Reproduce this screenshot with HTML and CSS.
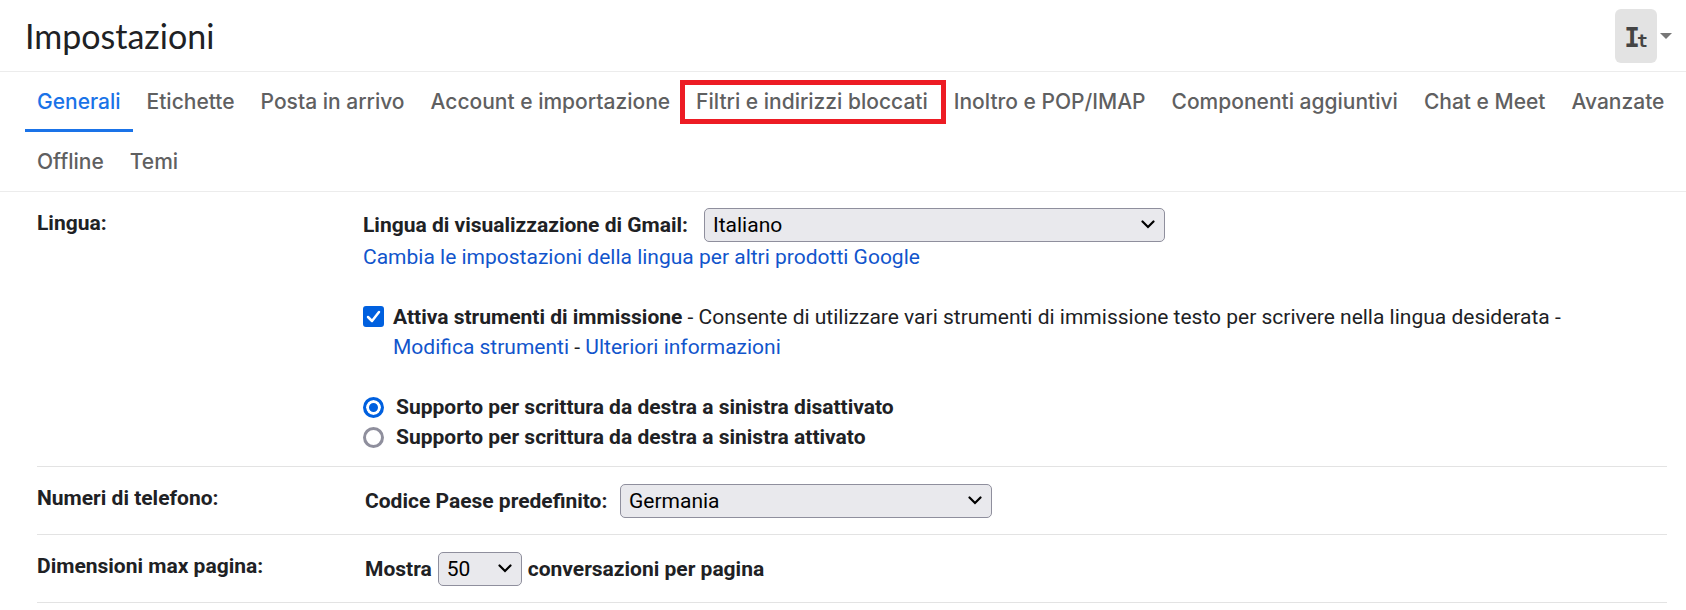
FILE: index.html
```html
<!DOCTYPE html>
<html lang="it">

<head>
    <meta charset="UTF-8">
    <meta name="viewport" content="width=device-width, initial-scale=1.0">
    <title>Impostazioni</title>
    <link rel="stylesheet" href="styles.css">
</head>

<body>
    <header class="header">
        <h1 class="title">Impostazioni</h1>
        <div class="input-tools">
            <button class="tool-button" type="button"><span class="big">I</span><span class="small">t</span></button>
            <button class="tool-menu" type="button" aria-label="Seleziona strumento">
                <svg width="12" height="6" viewBox="0 0 12 6"><path d="M0 0h12L6 6z" fill="#777"/></svg>
            </button>
        </div>
    </header>

    <nav class="tabs">
        <a class="tab active" href="#">Generali</a>
        <a class="tab" href="#">Etichette</a>
        <a class="tab" href="#">Posta in arrivo</a>
        <a class="tab" href="#">Account e importazione</a>
        <a class="tab marked" href="#">Filtri e indirizzi bloccati</a>
        <a class="tab" href="#">Inoltro e POP/IMAP</a>
        <a class="tab" href="#">Componenti aggiuntivi</a>
        <a class="tab" href="#">Chat e Meet</a>
        <a class="tab" href="#">Avanzate</a>
        <a class="tab" href="#">Offline</a>
        <a class="tab" href="#">Temi</a>
    </nav>

    <form class="settings">
        <table class="settings-table">
            <tr>
                <th scope="row">Lingua:</th>
                <td>
                    <div class="field">
                        <label class="language-label" for="language">Lingua di visualizzazione di Gmail:</label>
                        <select id="language" class="select language">
                            <option>Italiano</option>
                            <option>English</option>
                        </select>
                    </div>
                    <div><a href="#">Cambia le impostazioni della lingua per altri prodotti Google</a></div>

                    <div class="option group">
                        <input type="checkbox" id="tools" class="check" checked>
                        <div>
                            <label for="tools">Attiva strumenti di immissione</label> - Consente di utilizzare vari strumenti di immissione testo per scrivere nella lingua desiderata -
                            <br>
                            <a href="#">Modifica strumenti</a> - <a href="#">Ulteriori informazioni</a>
                        </div>
                    </div>

                    <div class="option radio-option group">
                        <input type="radio" id="rtl-off" name="rtl" class="radio" checked>
                        <label for="rtl-off">Supporto per scrittura da destra a sinistra disattivato</label>
                    </div>
                    <div class="option radio-option">
                        <input type="radio" id="rtl-on" name="rtl" class="radio">
                        <label for="rtl-on">Supporto per scrittura da destra a sinistra attivato</label>
                    </div>
                </td>
            </tr>
            <tr class="single">
                <th scope="row">Numeri di telefono:</th>
                <td>
                    <div class="field">
                        <label class="country-label" for="country">Codice Paese predefinito:</label>
                        <select id="country" class="select country">
                            <option>Germania</option>
                            <option>Italia</option>
                        </select>
                    </div>
                </td>
            </tr>
            <tr class="single">
                <th scope="row">Dimensioni max pagina:</th>
                <td>
                    <div class="field">
                        <label for="page-size">Mostra</label>
                        <select id="page-size" class="select page-size">
                            <option>50</option>
                            <option>100</option>
                        </select>
                        <label for="page-size">conversazioni per pagina</label>
                    </div>
                </td>
            </tr>
        </table>
    </form>
</body>

</html>
```

FILE: styles.css
```css
*,
*::after {
    box-sizing: border-box;
}

body {
    margin: 0;
    background-color: #fff;
    color: #202124;
    font-family: Roboto, sans-serif;
    font-size: 21px;
    line-height: 30px;
}

a {
    color: #1155cc;
    text-decoration: none;
}

/* header */
.header {
    display: flex;
    justify-content: space-between;
    align-items: center;
    height: 72px;
    padding: 0 14px 0 25px;
    border-bottom: 1px solid #ececec;
}

.title {
    margin: 0;
    font-family: Lato, sans-serif;
    font-size: 34px;
    font-weight: 400;
}

.input-tools {
    display: flex;
    align-items: center;
    gap: 3px;
}

.tool-button {
    display: flex;
    justify-content: center;
    align-items: baseline;
    width: 42px;
    height: 54px;
    padding: 14px 0 0;
    border: none;
    border-radius: 6px;
    background-color: #e3e3e3;
    color: #444;
    font-family: "DejaVu Sans Mono", monospace;
    font-weight: 700;
    line-height: 30px;
}

.tool-button .big {
    margin-right: -3px;
    font-size: 26px;
}

.tool-button .small {
    font-size: 18px;
}

.tool-menu {
    display: flex;
    padding: 0;
    border: none;
    background: none;
}

/* tabs */
.tabs {
    display: flex;
    flex-wrap: wrap;
    column-gap: 2px;
    padding-left: 25px;
    box-shadow: inset 0 -1px #ececec;
}

.tab {
    position: relative;
    height: 60px;
    padding: 15px 12px 0;
    color: #5f6061;
    font-family: Inter, sans-serif;
    font-size: 21px;
    font-weight: 500;
}

.tab.active {
    border-bottom: 3px solid #1a73e8;
    color: #1a73e8;
}

/* red frame around the highlighted tab */
.tab.marked::after {
    content: "";
    position: absolute;
    top: 8px;
    left: -4px;
    right: -6px;
    height: 44px;
    border: 5px solid #ed1c24;
}

/* settings */
.settings {
    padding: 0 19px 0 37px;
}

.settings-table {
    width: 100%;
    border-collapse: collapse;
}

.settings-table tr {
    border-bottom: 1px solid #e3e3e3;
}

th {
    width: 326px;
    padding: 16px 0 0;
    text-align: left;
    vertical-align: top;
}

td {
    padding: 15px 0 14px;
}

.single td {
    padding: 16px 0 16px 2px;
}

label {
    font-weight: 700;
}

.field {
    display: flex;
    align-items: center;
    gap: 6px;
    height: 35px;
}

.language-label {
    min-width: 335px;
}

.country-label {
    min-width: 249px;
}

.select {
    appearance: none;
    height: 34px;
    padding: 0 8px;
    border: 1px solid #8f8f9d;
    border-radius: 5px;
    background: #e9e9ed url("data:image/svg+xml,%3Csvg xmlns='http://www.w3.org/2000/svg' width='14' height='9' viewBox='0 0 14 9'%3E%3Cpath d='M1.5 1.5 7 7l5.500-5.500' fill='none' stroke='%23000' stroke-width='2.200' stroke-linecap='round'/%3E%3C/svg%3E") no-repeat right 9px center;
    color: #000;
    font-family: inherit;
    font-size: 21px;
}

.language {
    width: 461px;
}

.country {
    width: 372px;
}

.page-size {
    width: 84px;
}

.option {
    display: flex;
    align-items: flex-start;
    gap: 9px;
}

.radio-option {
    gap: 12px;
}

.group {
    margin-top: 30px;
}

.check,
.radio {
    appearance: none;
    flex: none;
    width: 21px;
    height: 21px;
    margin: 4px 0 0;
    border: 2px solid #8f8f9d;
    background-color: #fff;
}

.check {
    border-radius: 3px;
}

.check:checked {
    border-color: #0060df;
    background: #0060df url("data:image/svg+xml,%3Csvg xmlns='http://www.w3.org/2000/svg' width='15' height='13' viewBox='0 0 15 13'%3E%3Cpath d='M2 7l4 4 7-9' fill='none' stroke='%23fff' stroke-width='2.500' stroke-linecap='round' stroke-linejoin='round'/%3E%3C/svg%3E") no-repeat center;
}

.radio {
    margin-top: 5px;
    border-width: 3px;
    border-radius: 50%;
}

.radio:checked {
    border-color: #0060df;
    background-color: #0060df;
    box-shadow: inset 0 0 0 3px #fff;
}
```
